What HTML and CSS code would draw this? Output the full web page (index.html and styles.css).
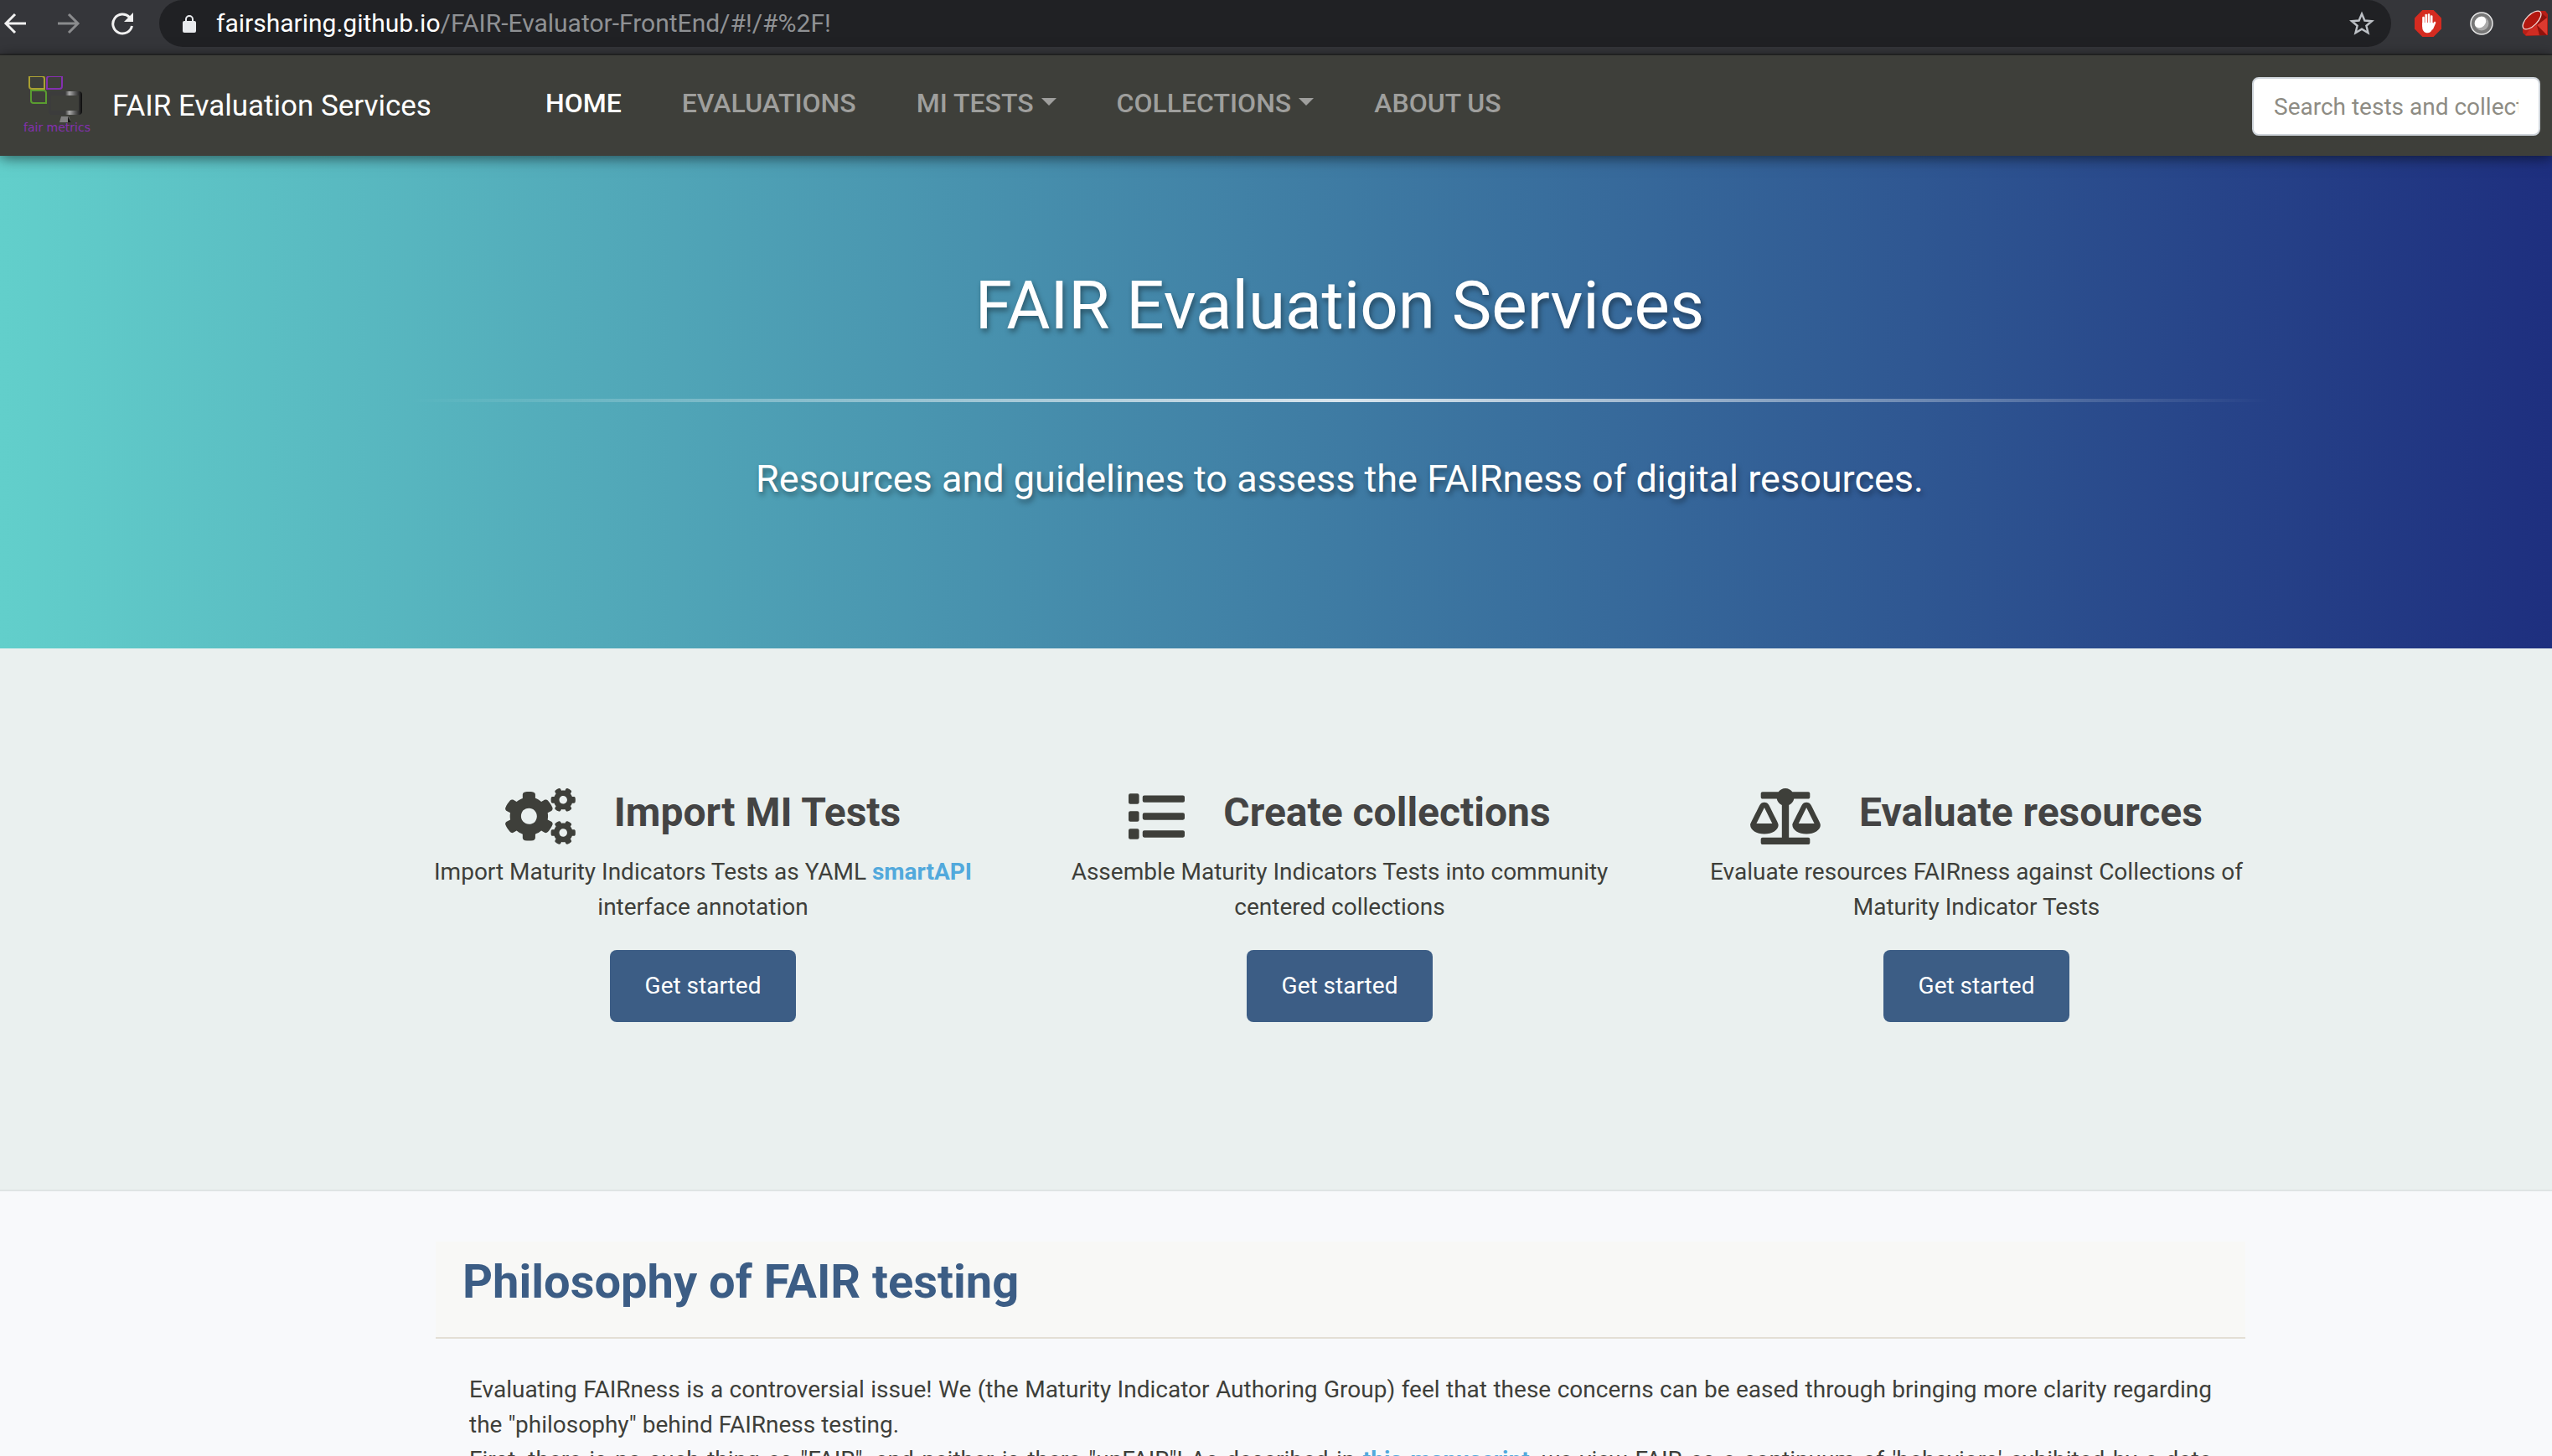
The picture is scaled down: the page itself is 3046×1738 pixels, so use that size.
FILE: index.html
```html
<!DOCTYPE html>
<html lang="en">
<head>
<meta charset="utf-8">
<title>FAIR Evaluation Services</title>
<link rel="stylesheet" href="styles.css">
</head>
<body>
<div class="browser">
  <button class="browser-btn" aria-label="Back"><svg viewBox="0 0 28 28" width="28" height="28" fill="none" stroke="#f1f1f1" stroke-width="3"><path d="M27 14H3M14 3L3 14l11 11"/></svg></button>
  <button class="browser-btn" aria-label="Forward"><svg viewBox="0 0 28 28" width="28" height="28" fill="none" stroke="#8a8b8d" stroke-width="3"><path d="M1 14h24M14 3l11 11-11 11"/></svg></button>
  <button class="browser-btn" aria-label="Reload"><svg viewBox="0 0 28 28" width="28" height="28"><path d="M22.500 6.500A11.500 11.500 0 1 0 25.500 17" fill="none" stroke="#f1f1f1" stroke-width="3"/><path d="M27 1v11H16z" fill="#f1f1f1"/></svg></button>
  <div class="address">
    <svg class="lock" viewBox="0 0 16 22" width="16" height="22"><path d="M4 9V6a4 4 0 0 1 8 0v3" fill="none" stroke="#e8eaed" stroke-width="2"/><rect y="8" width="16" height="14" rx="2" fill="#e8eaed"/></svg>
    <span class="url"><span class="url-host">fairsharing.github.io</span>/FAIR-Evaluator-FrontEnd/#!/#%2F!</span>
    <svg class="star" viewBox="0 0 30 30" width="30" height="30"><path d="M15 3.500l3.400 8 8.600.7-6.600 5.600 2.100 8.500L15 21.700l-7.500 4.600 2.100-8.500L3 12.200l8.600-.7z" fill="none" stroke="#bdc1c6" stroke-width="2.400"/></svg>
  </div>
  <div class="extensions">
    <svg viewBox="0 0 32 32" width="32" height="32"><path d="M9.400 0h13.200L32 9.400v13.200L22.600 32H9.400L0 22.600V9.400z" fill="#d52b20"/><g stroke="#fff" stroke-width="2.600" stroke-linecap="round"><path d="M10.500 9v10M13.700 6v13M17 5.500V19M20.200 7.500V19M24 15l-3 7"/></g><path d="M9.200 15h12.300l2 2-2.500 6c-1.200 3-3 4.200-5.500 4.200-4 0-6.300-2.700-6.300-7z" fill="#fff"/></svg>
    <svg viewBox="0 0 28 28" width="28" height="28"><circle cx="14" cy="14" r="13" fill="#777" stroke="#e8e8e8" stroke-width="1.500"/><circle cx="14" cy="14" r="8.500" fill="#aaa"/><ellipse cx="12.500" cy="12.500" rx="7.500" ry="6" transform="rotate(-45 12.500 12.500)" fill="#fff"/></svg>
    <svg viewBox="0 0 32 32" width="32" height="32"><path d="M1 19C2 11 12 1 22 1l6 0 3 4v25l-26 1-4-4z" fill="#b81f17"/><path d="M4 30l6-8 8-4 3 12z" fill="#cf2c22"/><path d="M18 18L30 9v21z" fill="#dc3a2f"/><path d="M18 18L30 9 24 4zM21 30l-3-12 12 12z" fill="#8f130d"/><ellipse cx="12" cy="12" rx="14" ry="6.500" transform="rotate(-45 12 12)" fill="#b3180f" stroke="#f3dcd9" stroke-width="1.300"/></svg>
  </div>
</div>

<nav class="navbar">
  <a class="brand" href="#">
    <svg class="logo" viewBox="0 5 84 72" width="84" height="72">
      <defs>
        <linearGradient id="metal"><stop offset="0" stop-color="#3c3c3c"/><stop offset=".5" stop-color="#3c3c3c"/><stop offset=".62" stop-color="#aaa"/><stop offset=".8" stop-color="#555"/><stop offset="1" stop-color="#0c0c0c"/></linearGradient>
      </defs>
      <g fill="none" stroke-width="2">
        <path d="M7 5h15q3 0 3 3v12H10q-3 0-3-3z" stroke="#aaa032"/>
        <path d="M31 5h15v12q0 3-3 3H28V8q0-3 3-3z" stroke="#8430b0"/>
        <path d="M9 22h15q3 0 3 3v12H12q-3 0-3-3z" stroke="#5a9c30"/>
      </g>
      <path d="M34 23h32q4 0 4 4v20q0 4-4 4H34q-4 0-4-4V27q0-4 4-4zM33 28v18h33V28z" fill="url(#metal)" fill-rule="evenodd"/>
      <path d="M45 53h9l3 7H43z" fill="#808080"/><path d="M53 53l4 7h-4z" fill="#161616"/>
      <text x="0" y="71" class="logo-text">fair metrics</text>
    </svg>
    FAIR Evaluation Services
  </a>
  <div class="menu">
    <a class="menu-item active" href="#">HOME</a>
    <a class="menu-item" href="#">EVALUATIONS</a>
    <a class="menu-item dropdown" href="#">MI TESTS</a>
    <a class="menu-item dropdown" href="#">COLLECTIONS</a>
    <a class="menu-item" href="#">ABOUT US</a>
  </div>
  <input class="search" type="text" aria-label="Search tests and collections" placeholder="Search tests and collections">
</nav>

<header class="hero">
  <h1>FAIR Evaluation Services</h1>
  <hr>
  <p>Resources and guidelines to assess the FAIRness of digital resources.</p>
</header>

<section class="features">
  <article class="feature">
    <h2><svg viewBox="0 0 640 512" width="84" height="67"><path fill="currentColor" d="M512.100 191l-8.200 14.300c-3 5.300-9.400 7.500-15.100 5.400-11.800-4.400-22.600-10.700-32.100-18.600-4.600-3.800-5.800-10.500-2.800-15.700l8.200-14.300c-6.900-8-12.300-17.300-15.900-27.400h-16.500c-6 0-11.200-4.300-12.200-10.300-2-12-2.100-24.600 0-37.100 1-6 6.200-10.400 12.200-10.400h16.500c3.600-10.100 9-19.400 15.900-27.400l-8.200-14.300c-3-5.200-1.900-11.900 2.800-15.700 9.500-7.900 20.400-14.200 32.100-18.600 5.700-2.100 12.100.1 15.100 5.400l8.200 14.300c10.500-1.900 21.200-1.900 31.700 0L552 6.300c3-5.300 9.400-7.500 15.100-5.400 11.800 4.400 22.600 10.700 32.100 18.600 4.600 3.800 5.800 10.500 2.800 15.700l-8.200 14.300c6.900 8 12.300 17.300 15.900 27.400h16.500c6 0 11.200 4.300 12.200 10.300 2 12 2.100 24.600 0 37.100-1 6-6.200 10.400-12.200 10.400h-16.500c-3.600 10.100-9 19.400-15.900 27.400l8.200 14.300c3 5.200 1.900 11.900-2.800 15.700-9.500 7.900-20.400 14.200-32.100 18.600-5.700 2.100-12.100-.1-15.100-5.400l-8.200-14.300c-10.400 1.900-21.200 1.900-31.700 0zm-10.500-58.800c38.500 29.600 82.400-14.300 52.800-52.800-38.500-29.700-82.400 14.300-52.800 52.800zM386.300 286.100l33.700 16.800c10.100 5.800 14.500 18.100 10.500 29.100-8.900 24.200-26.400 46.400-42.600 65.800-7.400 8.900-20.200 11.100-30.300 5.300l-29.100-16.800c-16 13.700-34.600 24.600-54.900 31.700v33.600c0 11.600-8.300 21.600-19.700 23.600-24.600 4.200-50.400 4.400-75.900 0-11.500-2-20-11.900-20-23.600V418c-20.300-7.200-38.900-18-54.900-31.700L74 403c-10 5.800-22.900 3.600-30.300-5.300-16.200-19.400-33.300-41.600-42.200-65.700-4-10.900.4-23.200 10.500-29.100l33.300-16.800c-3.900-20.900-3.900-42.400 0-63.400L12 205.800c-10.100-5.800-14.600-18.100-10.500-29 8.900-24.200 26-46.400 42.200-65.800 7.400-8.900 20.200-11.100 30.300-5.300l29.100 16.800c16-13.700 34.600-24.600 54.900-31.700V57.100c0-11.500 8.200-21.500 19.600-23.500 24.600-4.200 50.500-4.400 76-.1 11.500 2 20 11.900 20 23.600v33.600c20.300 7.200 38.900 18 54.900 31.700l29.100-16.800c10-5.800 22.900-3.600 30.300 5.300 16.200 19.400 33.200 41.600 42.100 65.800 4 10.900.1 23.200-10 29.100l-33.700 16.800c3.900 21 3.900 42.500 0 63.500zm-117.600 21.100c59.200-77-28.700-164.900-105.700-105.700-59.200 77 28.700 164.900 105.700 105.700zm243.400 182.700l-8.200 14.300c-3 5.300-9.400 7.500-15.100 5.400-11.800-4.400-22.600-10.700-32.100-18.600-4.600-3.800-5.800-10.500-2.800-15.700l8.200-14.300c-6.900-8-12.300-17.300-15.900-27.400h-16.500c-6 0-11.200-4.300-12.200-10.300-2-12-2.100-24.600 0-37.100 1-6 6.200-10.400 12.200-10.400h16.500c3.600-10.100 9-19.400 15.900-27.400l-8.200-14.300c-3-5.200-1.900-11.900 2.800-15.700 9.500-7.900 20.400-14.200 32.100-18.600 5.700-2.100 12.100.1 15.100 5.400l8.200 14.300c10.500-1.900 21.200-1.900 31.700 0l8.200-14.300c3-5.300 9.400-7.500 15.100-5.400 11.800 4.400 22.600 10.700 32.100 18.600 4.600 3.800 5.800 10.500 2.800 15.700l-8.200 14.300c6.900 8 12.300 17.300 15.900 27.400h16.500c6 0 11.200 4.300 12.200 10.300 2 12 2.100 24.600 0 37.100-1 6-6.200 10.400-12.200 10.400h-16.500c-3.600 10.100-9 19.400-15.900 27.400l8.200 14.300c3 5.200 1.900 11.900-2.800 15.700-9.500 7.900-20.400 14.200-32.100 18.600-5.700 2.100-12.100-.1-15.100-5.400l-8.200-14.300c-10.400 1.900-21.200 1.900-31.700 0zM501.600 431c38.500 29.600 82.400-14.300 52.800-52.800-38.500-29.600-82.400 14.300-52.800 52.800z"/></svg>Import MI Tests</h2>
    <p>Import Maturity Indicators Tests as YAML <a href="#">smartAPI</a> interface annotation</p>
    <button class="start">Get started</button>
  </article>
  <article class="feature">
    <h2><svg viewBox="0 0 512 512" width="67" height="67"><path fill="currentColor" d="M80 368H16a16 16 0 0 0-16 16v64a16 16 0 0 0 16 16h64a16 16 0 0 0 16-16v-64a16 16 0 0 0-16-16zm0-320H16A16 16 0 0 0 0 64v64a16 16 0 0 0 16 16h64a16 16 0 0 0 16-16V64a16 16 0 0 0-16-16zm0 160H16a16 16 0 0 0-16 16v64a16 16 0 0 0 16 16h64a16 16 0 0 0 16-16v-64a16 16 0 0 0-16-16zm416 176H144a16 16 0 0 0-16 16v32a16 16 0 0 0 16 16h352a16 16 0 0 0 16-16v-32a16 16 0 0 0-16-16zm0-320H144a16 16 0 0 0-16 16v32a16 16 0 0 0 16 16h352a16 16 0 0 0 16-16V80a16 16 0 0 0-16-16zm0 160H144a16 16 0 0 0-16 16v32a16 16 0 0 0 16 16h352a16 16 0 0 0 16-16v-32a16 16 0 0 0-16-16z"/></svg>Create collections</h2>
    <p>Assemble Maturity Indicators Tests into community centered collections</p>
    <button class="start">Get started</button>
  </article>
  <article class="feature">
    <h2><svg viewBox="0 0 640 512" width="84" height="67"><path fill="currentColor" d="M256 336h-.02c0-16.180 1.340-8.730-85.050-181.510-17.650-35.290-68.190-35.360-85.870 0C-2.060 328.750.02 320.330.02 336H0c0 44.180 57.310 80 128 80s128-35.820 128-80zM128 176l72 144H56l72-144zm511.980 160c0-16.180 1.340-8.730-85.050-181.510-17.650-35.290-68.190-35.360-85.870 0-87.120 174.260-85.040 165.840-85.040 181.510H384c0 44.180 57.310 80 128 80s128-35.820 128-80h-.02zM440 320l72-144 72 144H440zm88 128H352V153.250c23.510-10.290 41.160-31.480 46.390-57.250H528c8.840 0 16-7.160 16-16V48c0-8.840-7.160-16-16-16H383.640C369.040 12.680 346.090 0 320 0s-49.040 12.680-63.640 32H112c-8.840 0-16 7.160-16 16v32c0 8.840 7.160 16 16 16h129.610c5.230 25.760 22.870 46.960 46.390 57.250V448H112c-8.840 0-16 7.160-16 16v32c0 8.840 7.160 16 16 16h416c8.840 0 16-7.160 16-16v-32c0-8.840-7.160-16-16-16z"/></svg>Evaluate resources</h2>
    <p>Evaluate resources FAIRness against Collections of Maturity Indicator Tests</p>
    <button class="start">Get started</button>
  </article>
</section>

<main class="philosophy">
  <h2>Philosophy of FAIR testing</h2>
  <div class="prose">
    <p>Evaluating FAIRness is a controversial issue! We (the Maturity Indicator Authoring Group) feel that these concerns can be eased through bringing more clarity regarding the "philosophy" behind FAIRness testing.</p>
    <p>First, there is no such thing as "FAIR", and neither is there "unFAIR"! As described in <a href="#">this manuscript</a>, we view FAIR as a continuum of 'behaviors' exhibited by a data resource</p>
  </div>
</main>
</body>
</html>
```
FILE: styles.css
```css
* { box-sizing: border-box; }
html { overflow: hidden; }
body {
  margin: 0;
  font: 28px/42px Roboto, sans-serif;
  color: #3e3f3a;
  background: #f8f9fb;
}
a { color: #52a9dc; font-weight: 700; text-decoration: none; }
button, input { font: inherit; }
h1, h2, p { margin: 0; }

.browser {
  display: flex;
  height: 66px;
  padding: 0 0 8px 4px;
  background: #35363a;
  border-bottom: 2px solid #292a2a;
}
.browser-btn {
  display: flex;
  align-items: center;
  width: 64px;
  padding: 0;
  border: 0;
  background: none;
}
.address {
  display: flex;
  align-items: center;
  flex: 1;
  margin-left: -6px;
  padding: 0 20px 0 28px;
  border-radius: 28px;
  background: #202124;
}
.lock { margin-right: 24px; }
.url { flex: 1; color: #8f9194; font-size: 30px; }
.url-host { color: #fff; }
.extensions {
  display: flex;
  align-items: center;
  justify-content: space-between;
  width: 192px;
  padding: 0 4px 0 28px;
}

.navbar {
  position: relative;
  display: flex;
  align-items: center;
  height: 120px;
  padding: 2px 14px 0 28px;
  background: #3e3f3a;
  box-shadow: 0 2px 16px rgba(0, 0, 0, .6);
}
.brand {
  display: flex;
  align-items: center;
  gap: 22px;
  color: #fff;
  font-size: 35px;
  font-weight: 400;
}
.logo-text { font: 14px "DejaVu Sans", sans-serif; fill: #8430b0; }
.menu {
  display: flex;
  flex: 1;
  gap: 72px;
  margin: 0 0 8px 136px;
}
.menu-item { color: #9f9f9d; font-size: 32px; font-weight: 500; }
.active { color: #fff; }
.dropdown::after {
  content: "";
  display: inline-block;
  margin-left: 9px;
  vertical-align: 8px;
  border: 9px solid transparent;
  border-top-color: currentColor;
  border-bottom: 0;
}
.search {
  width: 344px;
  height: 70px;
  padding: 0 24px;
  border: 2px solid #ced4da;
  border-radius: 8px;
  background: #fff;
}
.search::placeholder { color: #8e8c84; opacity: 1; }

/* Content is centred on a viewport slightly wider than the window */
.hero, .features { padding-left: 489px; padding-right: 337px; }

.hero {
  height: 588px;
  padding-top: 119px;
  text-align: center;
  color: #fff;
  background: linear-gradient(90deg, #62cfcb, #1e2f7f);
  text-shadow: 2px 4px 6px rgba(0, 0, 0, .4);
}
.hero h1 { font-size: 80px; line-height: 120px; font-weight: 400; }
.hero hr {
  height: 4px;
  margin: 51px 0 62px;
  border: 0;
  background: linear-gradient(90deg, transparent, rgba(255, 255, 255, .8), transparent);
}
.hero p { font-size: 45px; line-height: 60px; }

.features {
  display: grid;
  grid-template-columns: repeat(3, 1fr);
  gap: 60px;
  height: 648px;
  padding-top: 158px;
  background: #eaf0ef;
  border-bottom: 2px solid #dfe4e4;
}
.feature { text-align: center; }
.feature h2 {
  display: flex;
  justify-content: center;
  align-items: flex-end;
  gap: 46px;
  margin-bottom: 12px;
  font-size: 48px;
  line-height: 76px;
  color: #444;
}
.feature svg { color: #3e3f3a; }
.start {
  width: 222px;
  height: 86px;
  margin-top: 30px;
  border: 0;
  border-radius: 8px;
  background: #3c5d85;
  color: #fff;
}

.philosophy { padding: 60px 366px 0 520px; }
.philosophy h2 {
  padding: 6px 32px 24px;
  border-bottom: 2px solid #e3dfd5;
  background: #f8f8f6;
  color: #3c5d85;
  font-size: 56px;
  line-height: 84px;
}
.prose { padding: 40px; text-align: justify; }
```
